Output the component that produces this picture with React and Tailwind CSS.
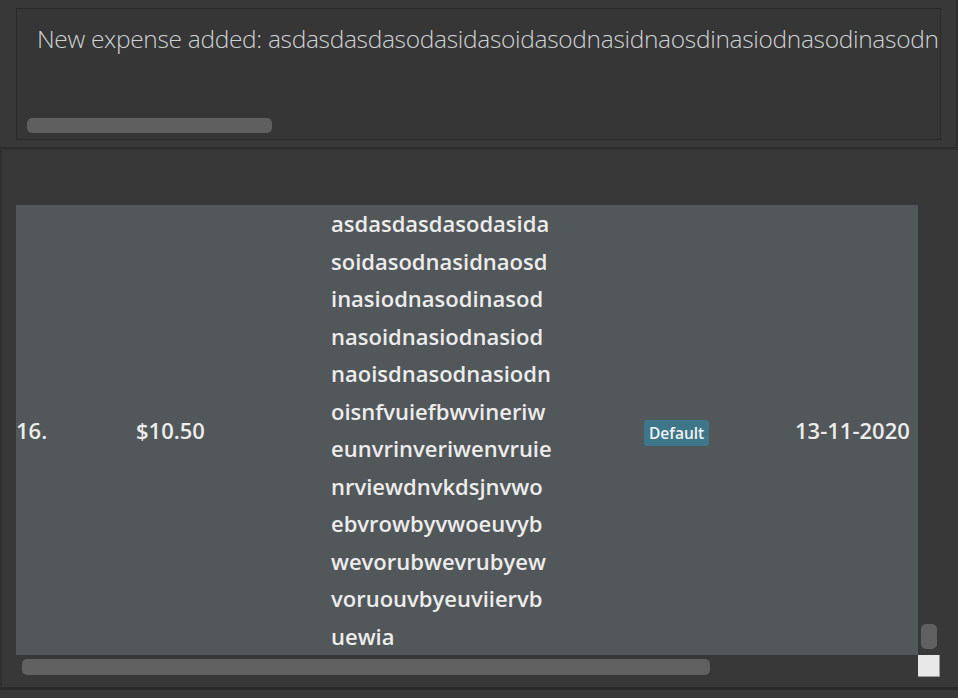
const descLines = [
  "asdasdasdasodasida",
  "soidasodnasidnaosd",
  "inasiodnasodinasod",
  "nasoidnasiodnasiod",
  "naoisdnasodnasiodn",
  "oisnfvuiefbwvineriw",
  "eunvrinveriwenvruie",
  "nrviewdnvkdsjnvwo",
  "ebvrowbyvwoeuvyb",
  "wevorubwevrubyew",
  "voruouvbyeuviiervb",
  "uewia",
];

const message =
  "New expense added: asdasdasdasodasidasoidasodnasidnaosdinasiodnasodinasodn";

export default function App() {
  return (
    <div
      className="w-[958px] h-[698px] bg-[#383838] overflow-hidden flex flex-col"
      style={{ fontFamily: "'Open Sans', 'Noto Sans', sans-serif" }}
    >
      {/* Result display */}
      <div className="h-[147px] pt-[8px] pl-[16px] pr-[15px] border-r-2 border-[#2e2e2e]">
        <div className="h-[132px] border border-[#2a2a2a] bg-[#363636] relative overflow-hidden">
          <div className="pl-[20px] pt-[14px] whitespace-nowrap text-[24.5px] font-light text-[#cfd2d4] leading-[32px] tracking-[-0.32px]">
            {message}
          </div>
          <div className="absolute left-[10px] top-[109px] w-[245px] h-[15px] rounded-[5px] bg-[#5f5f5f]" />
        </div>
      </div>

      {/* Divider */}
      <div className="h-[3px] bg-gradient-to-b from-[#2b2b2b] to-[#333333]" />

      {/* Expense list */}
      <div className="h-[540px] pt-[55px] pl-[14px] border-l-2 border-[#2f2f2f] border-b-[3px] border-b-[#2a2a2a]">
        <div className="flex">
          <div className="w-[902px] h-[450px] bg-[#52575a] flex items-center text-[22px] font-semibold text-[#ececec]">
            <div className="w-[120px]">16.</div>
            <div className="w-[195px]">$10.50</div>
            <div className="w-[313px] flex flex-col">
              {descLines.map((line, i) => (
                <div key={i} className="leading-[37.5px] whitespace-nowrap">
                  {line}
                </div>
              ))}
            </div>
            <div className="w-[151px]">
              <span className="inline-block bg-[#3e7689] rounded-[3px] px-[5px] text-[15.5px] font-semibold leading-[26px] text-[#eef4f6]">
                Default
              </span>
            </div>
            <div>13-11-2020</div>
          </div>
          <div className="w-[22px] h-[450px] flex flex-col justify-end items-center pb-[6px]">
            <div className="w-[16px] h-[25px] rounded-[5px] bg-[#606060]" />
          </div>
        </div>
        <div className="flex">
          <div className="w-[902px] h-[22px] pl-[6px] pt-[4px]">
            <div className="w-[688px] h-[16px] rounded-[5px] bg-[#606060]" />
          </div>
          <div className="w-[22px] h-[22px] bg-[#e8e8e8] border-r border-b border-[#9a9a9a]" />
        </div>
      </div>
    </div>
  );
}
